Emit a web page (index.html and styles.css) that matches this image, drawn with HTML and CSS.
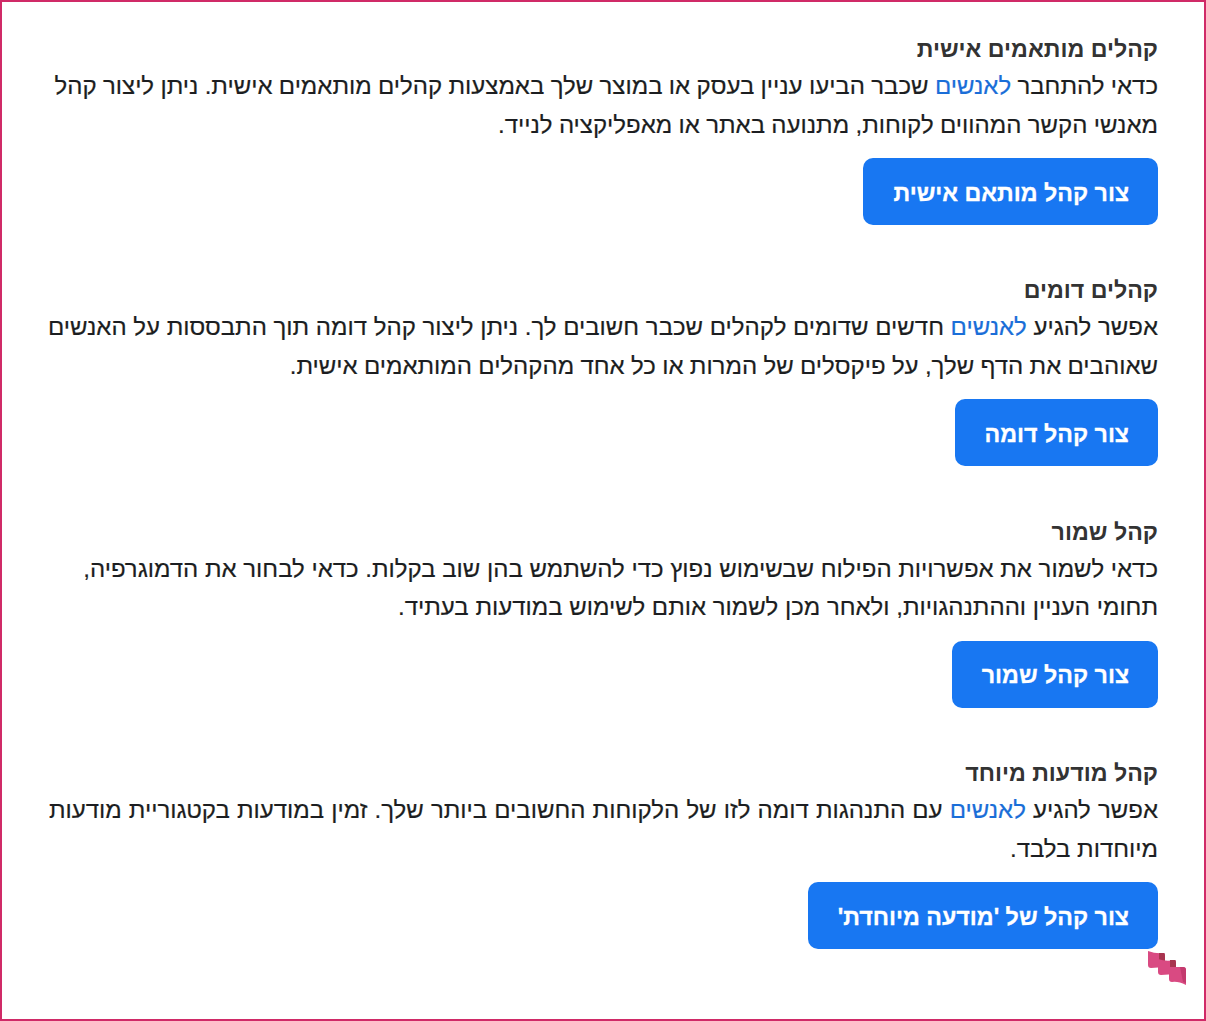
FILE: index.html
```html
<!DOCTYPE html>
<html lang="he" dir="rtl">
  <head>
    <meta charset="utf-8" />
    <title>קהלים</title>
    <link rel="stylesheet" href="styles.css">
  </head>
  <body>
    <div class="frame">
      <div class="section">
        <h3 class="title">קהלים מותאמים אישית</h3>
        <p class="text tight">כדאי להתחבר <a class="link">לאנשים</a> שכבר הביעו עניין בעסק או במוצר שלך באמצעות קהלים מותאמים אישית. ניתן ליצור קהל<br>מאנשי הקשר המהווים לקוחות, מתנועה באתר או מאפליקציה לנייד.</p>
        <button class="btn" type="button">צור קהל מותאם אישית</button>
      </div>
      <div class="section">
        <h3 class="title">קהלים דומים</h3>
        <p class="text">אפשר להגיע <a class="link">לאנשים</a> חדשים שדומים לקהלים שכבר חשובים לך. ניתן ליצור קהל דומה תוך התבססות על האנשים<br><span class="tight">שאוהבים את הדף שלך, על פיקסלים של המרות או כל אחד מהקהלים המותאמים אישית.</span></p>
        <button class="btn" type="button">צור קהל דומה</button>
      </div>
      <div class="section">
        <h3 class="title">קהל שמור</h3>
        <p class="text">כדאי לשמור את אפשרויות הפילוח שבשימוש נפוץ כדי להשתמש בהן שוב בקלות. כדאי לבחור את הדמוגרפיה,<br>תחומי העניין וההתנהגויות, ולאחר מכן לשמור אותם לשימוש במודעות בעתיד.</p>
        <button class="btn" type="button">צור קהל שמור</button>
      </div>
      <div class="section">
        <h3 class="title">קהל מודעות מיוחד</h3>
        <p class="text"><span class="wide">אפשר להגיע <a class="link">לאנשים</a> עם התנהגות דומה לזו של הלקוחות החשובים ביותר שלך. זמין במודעות בקטגוריית מודעות</span><br>מיוחדות בלבד.</p>
        <button class="btn" type="button">צור קהל של 'מודעה מיוחדת'</button>
      </div>
      <!-- ribbon mark in the corner -->
      <svg class="ribbon" width="40" height="36" viewBox="0 0 40 36">
        <path d="M0 1 Q8 4 16 3 Q17 3 17 6 L17 17 L3 18 Q0 18 0 15 Z" fill="#d94a82"/>
        <path d="M11 3 H16 Q17 3 17 6 V11 H11 Z" fill="#a8344f"/>
        <path d="M10 9 Q18 12 27 10 Q28 10 28 13 L28 24 L13 25 Q10 25 10 22 Z" fill="#d94a82"/>
        <path d="M22 10 H27 Q28 10 28 13 V17 H22 Z" fill="#a8344f"/>
        <path d="M21 17 H35 Q38 17 38 20 V35 Q30 31 24 32 Q21 32 21 29 Z" fill="#d94a82"/>
        <path d="M32 17 H35 Q38 17 38 20 V33 L35 32 Z" fill="#c43a6e"/>
      </svg>
    </div>
  </body>
</html>
```

FILE: styles.css
```css
/* Audience types panel */
html, body {
  margin: 0;
  padding: 0;
}
body {
  font-family: "Liberation Sans", Arial, sans-serif;
  background-color: #fff;
}
.frame {
  position: relative;
  box-sizing: border-box;
  width: 1206px;
  height: 1021px;
  border: 2px solid #d02a67;
  padding: 30px 46px 0 40px;
}
.section {
  height: 241.4px;
}
.title {
  margin: 0;
  font-size: 23.2px;
  font-weight: bold;
  line-height: 35px;
  color: #333;
}
.text {
  margin: 0;
  font-size: 24px;
  line-height: 38.5px;
  color: #1c1e21;
  -webkit-text-stroke: 0.2px #1c1e21;
}
.tight {
  word-spacing: -0.33px;
}
.wide {
  word-spacing: 0.45px;
}
.link {
  color: #1a6ed8;
  -webkit-text-stroke: 0.2px #1a6ed8;
}
.btn {
  display: block;
  height: 67px;
  margin-top: 14px;
  padding: 3px 29px 0 30px;
  border: none;
  border-radius: 10px;
  background-color: #1877f2;
  color: #fff;
  font-family: inherit;
  font-size: 23.2px;
  font-weight: bold;
  -webkit-text-stroke: 0.3px #fff;
}
.ribbon {
  position: absolute;
  left: 1146px;
  top: 948px;
}
```
